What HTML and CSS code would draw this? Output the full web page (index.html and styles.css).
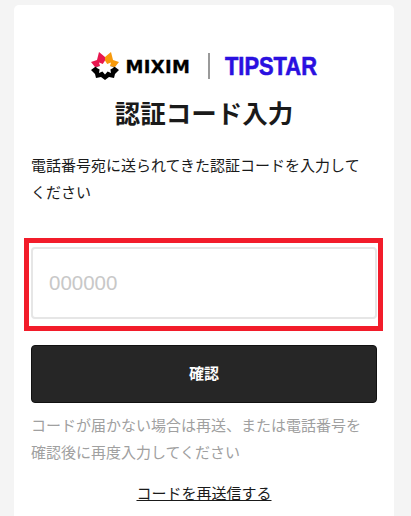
FILE: index.html
```html
<!DOCTYPE html>
<html lang="ja">
<head>
  <meta charset="UTF-8">
  <meta name="viewport" content="width=device-width, initial-scale=1.0">
  <title>認証コード入力</title>
  <link rel="stylesheet" href="styles.css">
</head>
<body>
  <div class="card">
    <div class="logo-row">
      <svg class="mixim-mark" viewBox="0 0 28 28" width="28" height="28" aria-hidden="true">
        <path fill="#e8174f" d="M0 10 L6 8 L8 0 L14 5 L14 14 L4 15 Z"/>
        <path fill="#f79a0c" d="M28 10 L22 8 L20 0 L14 5 L14 14 L24 15 Z"/>
        <path fill="#000" d="M4 15 L0 18 L4 22 L5 26 L10 25 L14 28 L18 25 L23 26 L24 22 L28 18 L24 15 L14 14 Z"/>
        <path fill="#fff" d="M14 8.5 L16.2 12 L20 10.5 L19 14 L23 15.5 L19.4 17.6 L20 21 L16.6 19.6 L14 22.5 L11.4 19.6 L8 21 L8.6 17.6 L5 15.5 L9 14 L8 10.5 L11.8 12 Z"/>
      </svg>
      <span class="mixim">MIXIM</span>
      <span class="logo-divider"></span>
      <span class="tipstar">TIPSTAR</span>
    </div>
    <h1>認証コード入力</h1>
    <p class="lead">電話番号宛に送られてきた認証コードを入力してください</p>

    <div class="code-field">
      <input type="text" class="code-input" placeholder="000000">
      <div class="highlight"></div>
    </div>

    <button class="submit-btn">確認</button>
    <p class="note">コードが届かない場合は再送、または電話番号を確認後に再度入力してください</p>
    <a class="resend" href="#">コードを再送信する</a>
  </div>
</body>
</html>
```

FILE: styles.css
```css
/* General Styles */
body {
  margin: 0;
  height: 516px;
  overflow: hidden;
  background: #f4f4f4;
  font-family: "Noto Sans CJK JP", "Liberation Sans", sans-serif;
  color: #1a1a1a;
}

/* Card */
.card {
  box-sizing: border-box;
  width: 380px;
  height: 511px;
  margin: 5px 0 0 14px;
  padding: 46px 17px 0;
  background: #fff;
  border-radius: 5px 5px 0 0;
}

/* Logo */
.logo-row {
  display: flex;
  align-items: center;
  justify-content: center;
  height: 30px;
}

.mixim-mark {
  margin-right: 7px;
}

.mixim {
  width: 64px;
  font-family: "DejaVu Sans", sans-serif;
  font-size: 18px;
  font-weight: 700;
  letter-spacing: 0.3px;
  white-space: nowrap;
  color: #000;
  -webkit-text-stroke: 0.3px #000;
}

.logo-divider {
  width: 2px;
  height: 26px;
  margin: 0 15px 0 18px;
  background: #9a9a9a;
}

/* squeezed, no narrow bold font is installed */
.tipstar {
  width: 93px;
  font-family: "Liberation Sans", sans-serif;
  font-size: 25px;
  font-weight: 700;
  white-space: nowrap;
  color: #2a10e0;
  -webkit-text-stroke: 0.6px #2a10e0;
  transform: scaleX(0.875);
  transform-origin: left center;
}

/* Title */
h1 {
  margin: 13px 0 0;
  font-size: 25.5px;
  line-height: 36px;
  font-weight: 700;
  text-align: center;
}

.lead {
  max-width: 340px;
  margin: 21px 0 0;
  font-size: 15px;
  line-height: 27px;
}

/* Code input */
.code-field {
  position: relative;
  margin-top: 42px;
}

.code-input {
  display: block;
  box-sizing: border-box;
  width: 100%;
  height: 72px;
  padding: 0 16px;
  border: 2px solid #e6e6e6;
  border-radius: 4px;
  background: #fff;
  font-family: "Liberation Sans", sans-serif;
  font-size: 20.5px;
}

.code-input::placeholder {
  color: #c8c8c8;
}

.highlight {
  position: absolute;
  left: -7px;
  right: -6px;
  top: -9px;
  bottom: -12px;
  border: 5px solid #f21c2a;
}

/* Submit */
.submit-btn {
  display: block;
  width: 100%;
  height: 58px;
  margin-top: 26px;
  padding: 0 0 3px;
  border: 1px solid #111;
  border-radius: 4px;
  background: #262626;
  color: #fff;
  font-family: inherit;
  font-size: 15px;
  font-weight: 700;
}

.note {
  max-width: 340px;
  margin: 8px 0 0;
  font-size: 15px;
  line-height: 27px;
  color: #a0a0a0;
}

.resend {
  display: block;
  width: fit-content;
  margin: 18px auto 0;
  font-size: 15px;
  line-height: 20px;
  color: #1a1a1a;
}
```
